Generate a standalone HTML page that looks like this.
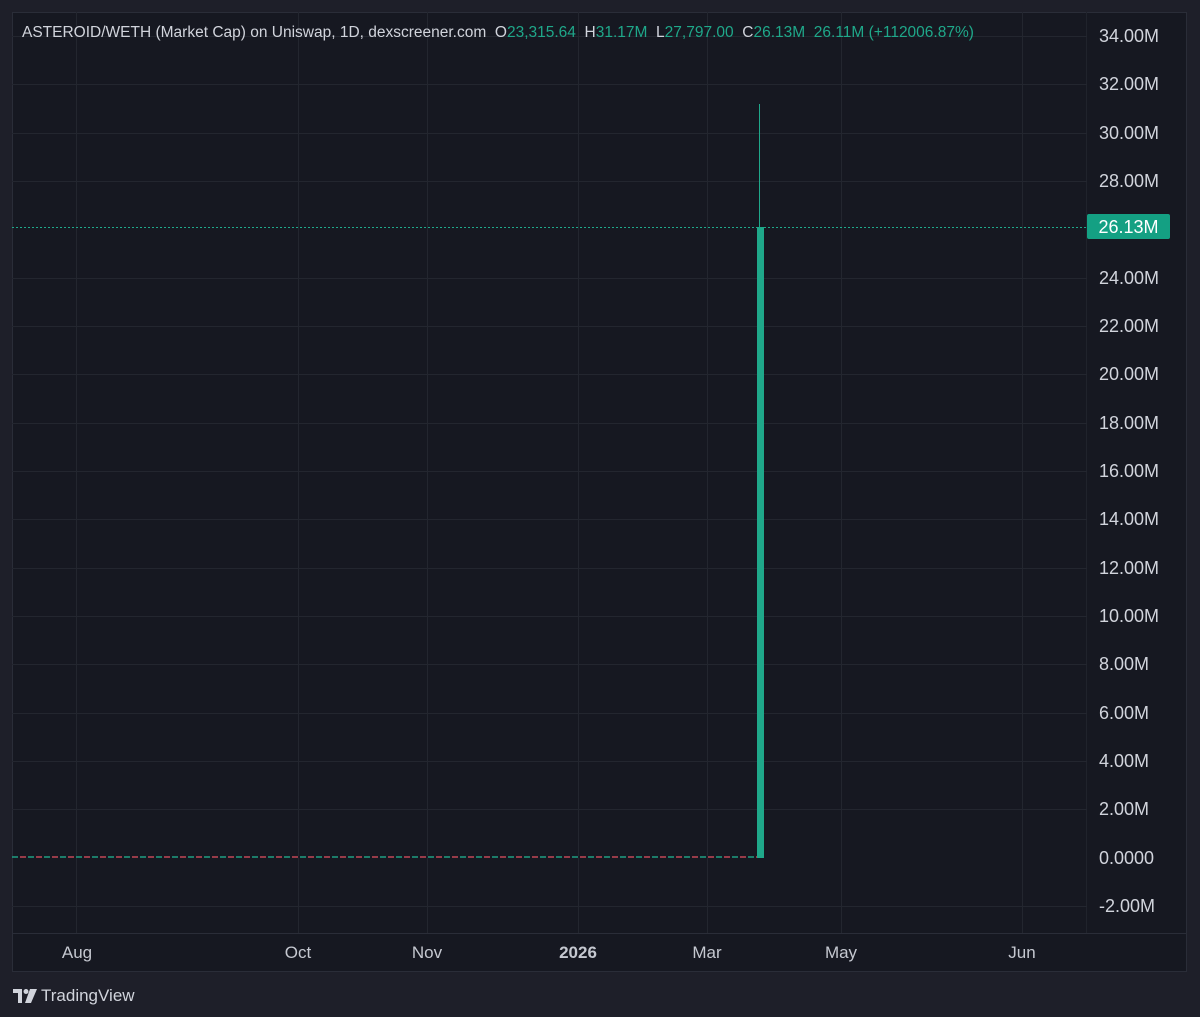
<!DOCTYPE html><html><head><style>
body{margin:0;width:1200px;height:1017px;background:#1e1f29;font-family:"Liberation Sans",sans-serif;overflow:hidden;position:relative}
.p{position:absolute;left:12px;top:12px;width:1175px;height:960px;background:#161821;border:1px solid #2a2d38;box-sizing:border-box}
.h{position:absolute;left:12px;width:1075px;height:1px;background:#23262f}
.v{position:absolute;top:12px;width:1px;height:921px;background:#23262f}
.pl{position:absolute;left:1099px;color:#d1d4dc;font-size:18px;transform:translateY(-10px)}
.t{position:absolute;top:943px;color:#c5c8d0;font-size:17px;transform:translateX(-50%)}
</style></head><body>
<div class="p"></div>
<div style="position:absolute;left:12px;top:933px;width:1175px;height:1px;background:#2a2d38"></div>
<div style="position:absolute;left:1086px;top:12px;width:1px;height:921px;background:#20232c"></div>
<div class="v" style="left:76px"></div><div class="v" style="left:298px"></div><div class="v" style="left:427px"></div><div class="v" style="left:578px"></div><div class="v" style="left:707px"></div><div class="v" style="left:841px"></div><div class="v" style="left:1022px"></div>
<div class="h" style="top:36px"></div><div class="h" style="top:84px"></div><div class="h" style="top:133px"></div><div class="h" style="top:181px"></div><div class="h" style="top:278px"></div><div class="h" style="top:326px"></div><div class="h" style="top:374px"></div><div class="h" style="top:423px"></div><div class="h" style="top:471px"></div><div class="h" style="top:519px"></div><div class="h" style="top:568px"></div><div class="h" style="top:616px"></div><div class="h" style="top:664px"></div><div class="h" style="top:713px"></div><div class="h" style="top:761px"></div><div class="h" style="top:809px"></div><div class="h" style="top:906px"></div>
<div class="pl" style="top:36px">34.00M</div><div class="pl" style="top:84px">32.00M</div><div class="pl" style="top:133px">30.00M</div><div class="pl" style="top:181px">28.00M</div><div class="pl" style="top:278px">24.00M</div><div class="pl" style="top:326px">22.00M</div><div class="pl" style="top:374px">20.00M</div><div class="pl" style="top:423px">18.00M</div><div class="pl" style="top:471px">16.00M</div><div class="pl" style="top:519px">14.00M</div><div class="pl" style="top:568px">12.00M</div><div class="pl" style="top:616px">10.00M</div><div class="pl" style="top:664px">8.00M</div><div class="pl" style="top:713px">6.00M</div><div class="pl" style="top:761px">4.00M</div><div class="pl" style="top:809px">2.00M</div><div class="pl" style="top:858px">0.0000</div><div class="pl" style="top:906px">-2.00M</div>
<div style="position:absolute;left:12px;top:227px;width:1075px;height:1px;background:repeating-linear-gradient(90deg,#1fa88a 0 2px,transparent 2px 4px)"></div>
<div style="position:absolute;left:1087px;top:214px;width:83px;height:25px;background:#14a083;border-radius:2px;color:#fff;font-size:18px;line-height:26px;text-align:center">26.13M</div>
<div style="position:absolute;left:12px;top:856px;width:748px;height:2px;opacity:.7;background:repeating-linear-gradient(90deg,#1fa88a 0 6px,#161821 6px 8px,#d04a5a 8px 14px,#161821 14px 16px)"></div>
<div style="position:absolute;left:759px;top:104px;width:1px;height:124px;background:#1fa88a"></div>
<div style="position:absolute;left:757px;top:227px;width:7px;height:631px;background:#1fa88a"></div>
<div style="position:absolute;left:22px;top:24px;font-size:15.5px;color:#d1d4dc;white-space:nowrap">ASTEROID/WETH (Market Cap) on Uniswap, 1D, dexscreener.com&nbsp; O<span style="color:#1fa88a">23,315.64</span>&nbsp; H<span style="color:#1fa88a">31.17M</span>&nbsp; L<span style="color:#1fa88a">27,797.00</span>&nbsp; C<span style="color:#1fa88a">26.13M</span>&nbsp; <span style="color:#1fa88a">26.11M (+112006.87%)</span></div>
<div class="t" style="left:77px">Aug</div><div class="t" style="left:298px">Oct</div><div class="t" style="left:427px">Nov</div><div class="t" style="left:578px;font-weight:bold">2026</div><div class="t" style="left:707px">Mar</div><div class="t" style="left:841px">May</div><div class="t" style="left:1022px">Jun</div>
<div style="position:absolute;left:13px;top:986px;color:#d1d4dc;font-size:17px;display:flex;align-items:center;gap:4px">
<svg width="24" height="14" viewBox="0 0 24 14"><path d="M0 0h9v14h-4v-10h-5z" fill="#d1d4dc"/><circle cx="13" cy="2.5" r="2.5" fill="#d1d4dc"/><path d="M17 0h7l-6 14h-6z" fill="#d1d4dc"/></svg>TradingView</div>
</body></html>
